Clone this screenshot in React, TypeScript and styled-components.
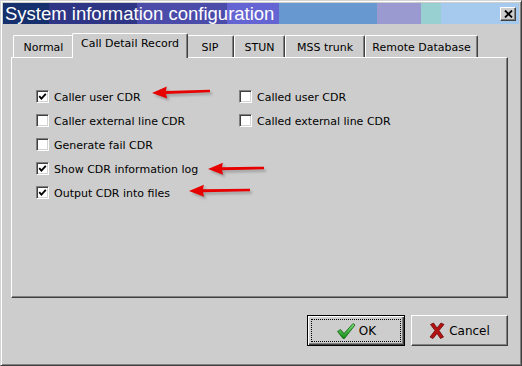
import React from "react";
import styled, { createGlobalStyle } from "styled-components";

const Global = createGlobalStyle`
  html, body { margin: 0; padding: 0; background: #cdcdcd; }
  body { font-family: "DejaVu Sans", "Liberation Sans", sans-serif; }
  * { box-sizing: border-box; }
`;

const Window = styled.div`
  position: relative;
  width: 522px;
  height: 366px;
  background: #cdcdcd;
  border: 1px solid;
  border-color: #d4d4d4 #404040 #404040 #d4d4d4;
  box-shadow: inset 1px 1px #ffffff, inset -1px -1px #808080;
  padding: 2px;
  display: flex;
  flex-direction: column;
`;

const TitleBar = styled.div`
  height: 21px;
  display: flex;
  align-items: center;
  justify-content: space-between;
  padding: 0 3px 0 2px;
  background: linear-gradient(
    to right,
    #15306c 0px, #15306c 46px,
    #2d3584 46px, #2d3584 134px,
    #4b4caa 134px, #4b4caa 224px,
    #6464d2 224px, #6464d2 276px,
    #6898d0 276px, #6898d0 374px,
    #9a9ad0 374px, #9a9ad0 418px,
    #98cfd0 418px, #98cfd0 438px,
    #a6c9ee 438px, #a6c9ee 100%
  );
`;

const Title = styled.span`
  font-family: "Liberation Sans", Arial, sans-serif;
  font-size: 18.5px;
  color: #ffffff;
  line-height: 21px;
  white-space: nowrap;
`;

const CloseButton = styled.div`
  width: 16px;
  height: 14px;
  background: #cdcdcd;
  border: 1px solid;
  border-color: #ffffff #404040 #404040 #ffffff;
  box-shadow: inset -1px -1px #808080;
  display: flex;
  align-items: center;
  justify-content: center;
`;

const Content = styled.div`
  flex: 1;
  display: flex;
  flex-direction: column;
  padding: 8px 11px 0 8px;
`;

const TabRow = styled.div`
  display: flex;
  align-items: flex-end;
  padding-left: 2px;
  height: 25px;
  position: relative;
  z-index: 1;
`;

const Tab = styled.div<{ $w: number; $active?: boolean }>`
  width: ${(p) => p.$w}px;
  height: ${(p) => (p.$active ? 25 : 22)}px;
  margin: 0 ${(p) => (p.$active ? -2 : 0)}px ${(p) => (p.$active ? -1 : 0)}px;
  position: relative;
  z-index: ${(p) => (p.$active ? 2 : 1)};
  background: #cdcdcd;
  border-top: 1px solid #ffffff;
  border-left: 1px solid #ffffff;
  border-right: 1px solid #404040;
  border-top-left-radius: 2px;
  border-top-right-radius: 2px;
  box-shadow: inset -1px 0 #808080;
  font-size: 11px;
  color: #000;
  display: flex;
  justify-content: center;
  padding-top: ${(p) => (p.$active ? 3 : 5)}px;
  white-space: nowrap;
`;

const Panel = styled.div`
  height: 241px;
  border: 1px solid;
  border-color: #ffffff #404040 #404040 #ffffff;
  box-shadow: inset -1px -1px #808080;
  padding: 32px 0 0 24px;
`;

const OptionGrid = styled.div`
  display: grid;
  grid-template-columns: 203px 220px;
  grid-auto-rows: 24px;
`;

const Option = styled.label<{ $row: number; $col: number }>`
  grid-row: ${(p) => p.$row};
  grid-column: ${(p) => p.$col};
  display: flex;
  align-items: flex-start;
  gap: 5px;
  font-size: 11px;
  color: #000;
  line-height: 13px;
  white-space: nowrap;
`;

const Box = styled.span`
  width: 13px;
  height: 13px;
  flex: none;
  background: #ffffff;
  border: 1px solid;
  border-color: #808080 #ffffff #ffffff #808080;
  box-shadow: inset 1px 1px #404040, inset -1px -1px #d4d4d4;
  display: flex;
  align-items: center;
  justify-content: center;
`;

const Label = styled.span`
  padding-top: 1px;
`;

const ButtonRow = styled.div`
  display: flex;
  justify-content: flex-end;
  gap: 6px;
  margin-top: 17px;
`;

const Button = styled.div<{ $default?: boolean; $w: number }>`
  width: ${(p) => p.$w}px;
  height: 31px;
  background: #cdcdcd;
  border: 1px solid;
  border-color: ${(p) => (p.$default ? "#000000" : "#ffffff #404040 #404040 #ffffff")};
  box-shadow: ${(p) =>
    p.$default
      ? "inset 1px 1px #ffffff, inset -1px -1px #404040, inset -2px -2px #808080"
      : "inset -1px -1px #808080"};
  display: flex;
  align-items: center;
  justify-content: center;
  padding: 3px;
  font-size: 12px;
  color: #000;
`;

const Focus = styled.div`
  width: 100%;
  height: 100%;
  border: 1px dotted #000;
  display: flex;
  align-items: center;
  justify-content: center;
  gap: 3px;
`;

const ButtonInner = styled.div`
  display: flex;
  align-items: center;
  gap: 4px;
`;

const Overlay = styled.svg`
  position: absolute;
  left: -1px;
  top: -1px;
  pointer-events: none;
`;

const Check = () => (
  <svg width="9" height="9" viewBox="0 0 9 9">
    <path d="M1.2 4.2 L3.4 6.6 L7.8 1.8" fill="none" stroke="#000" strokeWidth="1.8" />
  </svg>
);

const CheckBox = ({ checked }: { checked?: boolean }) => <Box>{checked && <Check />}</Box>;

const GreenCheck = () => (
  <svg width="20" height="18" viewBox="0 0 20 18">
    <defs>
      <linearGradient id="gc" x1="0" y1="0" x2="0" y2="1">
        <stop offset="0" stopColor="#7be07b" />
        <stop offset="1" stopColor="#138a13" />
      </linearGradient>
    </defs>
    <path
      d="M1.5 9.5 L4.5 7.5 L8 11.5 L17 1.5 L19 3 L8.5 16.5 L7 16.5 Z"
      fill="url(#gc)"
      stroke="#0d5e0d"
      strokeWidth="0.8"
      strokeLinejoin="round"
    />
  </svg>
);

const RedX = () => (
  <svg width="16" height="17" viewBox="0 0 16 17">
    <path
      d="M1.5 2.5 L4.5 1 L8 6 L12 1 L15 2.5 L10 8.5 L14.5 15 L11.5 16.5 L8 11.5 L4 16.5 L1 15 L6 8.5 Z"
      fill="#b31313"
      stroke="#6e0808"
      strokeWidth="0.8"
      strokeLinejoin="round"
    />
  </svg>
);

const Arrow = ({ tipX, tipY, tailX, tailY }: { tipX: number; tipY: number; tailX: number; tailY: number }) => {
  const ang = Math.atan2(tailY - tipY, tailX - tipX);
  const deg = (ang * 180) / Math.PI;
  const len = Math.hypot(tailX - tipX, tailY - tipY);
  const shape = `M0 0 L15 -6 L14 -1.6 L${len} -1.3 L${len} 1.3 L14 1.6 L15 6 Z`;
  return (
    <g transform={`translate(${tipX} ${tipY}) rotate(${deg})`}>
      <path d={shape} transform="translate(2 2.5)" fill="#7a7a7a" opacity="0.55" filter="url(#blur)" />
      <path d={shape} fill="#e60000" />
    </g>
  );
};

const options = [
  { label: "Caller user CDR", checked: true, row: 1, col: 1 },
  { label: "Caller external line CDR", checked: false, row: 2, col: 1 },
  { label: "Generate fail CDR", checked: false, row: 3, col: 1 },
  { label: "Show CDR information log", checked: true, row: 4, col: 1 },
  { label: "Output CDR into files", checked: true, row: 5, col: 1 },
  { label: "Called user CDR", checked: false, row: 1, col: 2 },
  { label: "Called external line CDR", checked: false, row: 2, col: 2 },
];

const tabs = [
  { label: "Normal", w: 61 },
  { label: "Call Detail Record", w: 116, active: true },
  { label: "SIP", w: 48 },
  { label: "STUN", w: 51 },
  { label: "MSS trunk", w: 80 },
  { label: "Remote Database", w: 113 },
];

export default function App() {
  return (
    <>
      <Global />
      <Window>
        <TitleBar>
          <Title>System information configuration</Title>
          <CloseButton>
            <svg width="9" height="8" viewBox="0 0 9 8">
              <path d="M1 0.5 L8 7.5 M8 0.5 L1 7.5" stroke="#000" strokeWidth="1.8" />
            </svg>
          </CloseButton>
        </TitleBar>
        <Content>
          <TabRow>
            {tabs.map((t) => (
              <Tab key={t.label} $w={t.w} $active={t.active}>
                {t.label}
              </Tab>
            ))}
          </TabRow>
          <Panel>
            <OptionGrid>
              {options.map((o) => (
                <Option key={o.label} $row={o.row} $col={o.col}>
                  <CheckBox checked={o.checked} />
                  <Label>{o.label}</Label>
                </Option>
              ))}
            </OptionGrid>
          </Panel>
          <ButtonRow>
            <Button $default $w={98}>
              <Focus>
                <GreenCheck />
                <span>OK</span>
              </Focus>
            </Button>
            <Button $w={97}>
              <ButtonInner>
                <RedX />
                <span>Cancel</span>
              </ButtonInner>
            </Button>
          </ButtonRow>
        </Content>
        <Overlay width="522" height="366" viewBox="0 0 522 366">
          <defs>
            <filter id="blur" x="-10%" y="-50%" width="120%" height="200%">
              <feGaussianBlur stdDeviation="1.2" />
            </filter>
          </defs>
          <Arrow tipX={152} tipY={93} tailX={210} tailY={91} />
          <Arrow tipX={208} tipY={169} tailX={264} tailY={168} />
          <Arrow tipX={189} tipY={191} tailX={250} tailY={190} />
        </Overlay>
      </Window>
    </>
  );
}
